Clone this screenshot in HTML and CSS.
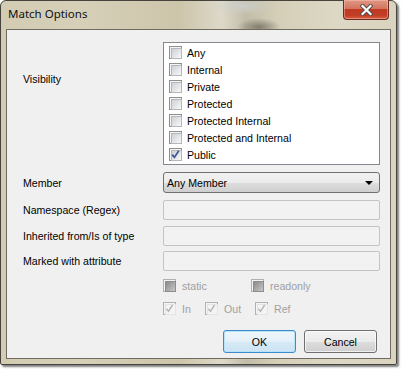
FILE: index.html
```html
<!DOCTYPE html>
<html lang="en">
<head>
  <meta charset="UTF-8">
  <title>Match Options</title>
  <link rel="stylesheet" href="styles.css">
</head>
<body>

<div class="window">
  <div class="titlebar">
    <span class="title">Match Options</span>
    <button class="close-btn" type="button" aria-label="Close">
      <svg width="13" height="12" viewBox="0 0 13 12">
        <path d="M2.5 2 L10.5 10 M10.5 2 L2.5 10" stroke="#4a4a4a" stroke-width="4" stroke-linecap="square"/>
        <path d="M2.5 2 L10.5 10 M10.5 2 L2.5 10" stroke="#ffffff" stroke-width="2.2" stroke-linecap="square"/>
      </svg>
    </button>
  </div>

  <div class="client">
    <div class="form-row row-top">
      <span class="field-label label-visibility">Visibility</span>
      <div class="checklist">
        <div class="check-item"><span class="chk"></span>Any</div>
        <div class="check-item"><span class="chk"></span>Internal</div>
        <div class="check-item"><span class="chk"></span>Private</div>
        <div class="check-item"><span class="chk"></span>Protected</div>
        <div class="check-item"><span class="chk"></span>Protected Internal</div>
        <div class="check-item"><span class="chk"></span>Protected and Internal</div>
        <div class="check-item">
          <span class="chk">
            <svg width="11" height="11" viewBox="0 0 11 11">
              <path d="M2.2 5.6 L4.4 8.4 L8.8 1.8" fill="none" stroke="#3f5590" stroke-width="1.7"/>
            </svg>
          </span>Public
        </div>
      </div>
    </div>

    <div class="form-row row-member">
      <span class="field-label">Member</span>
      <div class="combo">
        <span>Any Member</span>
        <span class="combo-arrow"></span>
      </div>
    </div>

    <div class="form-row row-namespace">
      <span class="field-label">Namespace (Regex)</span>
      <div class="textbox"></div>
    </div>

    <div class="form-row row-inherited">
      <span class="field-label">Inherited from/Is of type</span>
      <div class="textbox"></div>
    </div>

    <div class="form-row row-marked">
      <span class="field-label">Marked with attribute</span>
      <div class="textbox"></div>
    </div>

    <div class="check-row row-modifiers">
      <div class="opt opt-static"><span class="chk disabled mixed"></span>static</div>
      <div class="opt"><span class="chk disabled mixed"></span>readonly</div>
    </div>

    <div class="check-row row-params">
      <div class="opt opt-in">
        <span class="chk disabled">
          <svg width="11" height="11" viewBox="0 0 11 11">
            <path d="M2.4 5.8 L4.5 8.4 L8.6 2" fill="none" stroke="#b4b4b4" stroke-width="1.4"/>
          </svg>
        </span>In
      </div>
      <div class="opt opt-out">
        <span class="chk disabled">
          <svg width="11" height="11" viewBox="0 0 11 11">
            <path d="M2.4 5.8 L4.5 8.4 L8.6 2" fill="none" stroke="#b4b4b4" stroke-width="1.4"/>
          </svg>
        </span>Out
      </div>
      <div class="opt">
        <span class="chk disabled">
          <svg width="11" height="11" viewBox="0 0 11 11">
            <path d="M2.4 5.8 L4.5 8.4 L8.6 2" fill="none" stroke="#b4b4b4" stroke-width="1.4"/>
          </svg>
        </span>Ref
      </div>
    </div>

    <div class="button-row">
      <button class="btn btn-default" type="button">OK</button>
      <button class="btn" type="button">Cancel</button>
    </div>
  </div>
</div>

</body>
</html>
```

FILE: styles.css
```css
* {
  margin: 0;
  padding: 0;
  box-sizing: border-box;
}

body {
  width: 401px;
  height: 370px;
  overflow: hidden;
  background-color: #ffffff;
  font-family: 'Liberation Sans', Arial, sans-serif;
  font-size: 10.6px;
  color: #000000;
}

/* window frame (aero glass, blurred) */
.window {
  width: 397px;
  height: 365px;
  display: flex;
  flex-direction: column;
  padding: 0 5px 5px;
  border: 1px solid #45433b;
  border-radius: 6px 6px 2px 2px;
  box-shadow: 2px 2px 2px rgba(0, 0, 0, 0.5);
  background:
    radial-gradient(ellipse 22px 9px at 258px 26px, rgba(70, 66, 55, 0.55), transparent),
    radial-gradient(ellipse 30px 9px at 242px 5px, rgba(205, 208, 205, 0.9), transparent),
    linear-gradient(to right, #d3ccb3 0, #d6d0b9 20%, #cdc5aa 45%, #ddd9c9 56%, #c2bda8 62%, #d5cfb8 70%, #ddd8c5 85%, #d9d3bf 100%);
}

.titlebar {
  height: 28px;
  display: flex;
  align-items: flex-start;
}

.title {
  margin: 5px 0 0 2px;
  font-family: 'Noto Sans', 'Open Sans', sans-serif;
  font-size: 11.5px;
  line-height: 16px;
  color: #101010;
}

.close-btn {
  width: 46px;
  height: 20px;
  margin: -1px 2px 0 auto;
  display: flex;
  align-items: center;
  justify-content: center;
  border: 1px solid #6a2c22;
  border-top: none;
  border-radius: 0 0 4px 4px;
  box-shadow: inset 0 0 0 1px rgba(255, 200, 190, 0.45);
  background: linear-gradient(#e09884 0%, #d47560 45%, #c03a22 50%, #c13d24 80%, #dc5f40 100%);
}

.client {
  flex: 1;
  padding: 12px 0 0 16px;
  border: 1px solid #6f6b5e;
  background-color: #f0f0f0;
}

.form-row {
  display: grid;
  grid-template-columns: 140px 217px;
  align-items: center;
}

.row-top {
  align-items: start;
}

.label-visibility {
  margin-top: 31px;
}

.row-member {
  margin-top: 7px;
}

.row-namespace {
  margin-top: 7px;
}

.row-inherited {
  margin-top: 6px;
}

.row-marked {
  margin-top: 5px;
}

.field-label {
  color: #000000;
}

/* checked list box */
.checklist {
  height: 123px;
  padding: 1px 0 0 5px;
  border: 1px solid #828790;
  background-color: #ffffff;
}

.check-item {
  height: 17px;
  display: flex;
  align-items: center;
  gap: 5px;
}

.chk {
  position: relative;
  width: 13px;
  height: 13px;
  flex: none;
  padding: 1px;
  border: 1px solid #8e8f8f;
  background-color: #f4f4f4;
}

.chk::before {
  content: '';
  display: block;
  width: 9px;
  height: 9px;
  border: 1px solid #b4b8bd;
  background: linear-gradient(135deg, #cdd1d6, #f8f8f8);
}

.chk svg {
  position: absolute;
  left: 0;
  top: 0;
}

.chk.disabled {
  border-color: #b1b1b1;
}

.chk.disabled::before {
  border-color: #e4e4e4;
  background: #f4f4f4;
}

.chk.mixed::before {
  border-color: #8e8e8e;
  background: linear-gradient(135deg, #8c8c8c, #c6c6c6);
}

/* combo box */
.combo {
  height: 21px;
  display: flex;
  align-items: center;
  justify-content: space-between;
  padding: 0 6px 0 3px;
  border: 1px solid #707070;
  border-radius: 3px;
  background: linear-gradient(#f2f2f2 0%, #ebebeb 50%, #dddddd 51%, #cfcfcf 100%);
}

.combo-arrow {
  width: 0;
  height: 0;
  border-left: 4px solid transparent;
  border-right: 4px solid transparent;
  border-top: 4px solid #000000;
}

.textbox {
  height: 20px;
  border: 1px solid #c2c4c6;
  border-radius: 2px;
  background-color: #f2f2f2;
}

/* check box rows */
.check-row {
  display: flex;
  padding-left: 140px;
}

.row-modifiers {
  margin-top: 8px;
}

.row-params {
  margin-top: 10px;
}

.opt {
  display: flex;
  align-items: center;
  gap: 6px;
  height: 13px;
  color: #a0a0a0;
}

.opt-static {
  width: 88px;
}

.opt-in {
  width: 42px;
}

.opt-out {
  width: 50px;
}

/* dialog buttons */
.button-row {
  display: flex;
  justify-content: flex-end;
  gap: 8px;
  margin-top: 15px;
  padding-right: 13px;
}

.btn {
  width: 73px;
  height: 23px;
  font-family: 'Liberation Sans', Arial, sans-serif;
  font-size: 10.6px;
  color: #000000;
  border: 1px solid #707070;
  border-radius: 3px;
  box-shadow: inset 0 0 0 1px rgba(255, 255, 255, 0.7);
  background: linear-gradient(#f2f2f2 0%, #ebebeb 50%, #dddddd 51%, #cfcfcf 100%);
}

.btn-default {
  border-color: #3c8ccb;
  box-shadow: inset 0 0 0 1px #b8e2f8;
  background: linear-gradient(#eef6fc 0%, #e4f0f9 50%, #d6e9f6 51%, #cde4f3 100%);
}
```
